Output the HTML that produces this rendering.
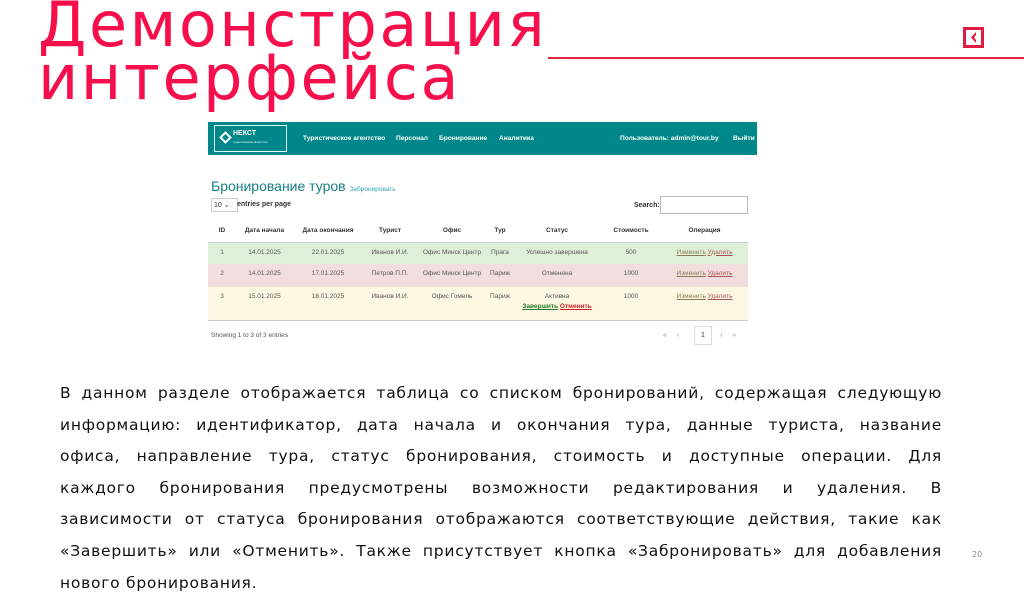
<!DOCTYPE html>
<html><head><meta charset="utf-8"><style>
*{margin:0;padding:0;box-sizing:border-box}
body{width:1024px;height:576px;overflow:hidden;background:#fff;position:relative;font-family:"DejaVu Sans","Liberation Sans",sans-serif}
.t{position:absolute;left:38px;color:#f70f4c;font-size:62px;line-height:53px;letter-spacing:2.5px;white-space:nowrap}
.line{position:absolute;left:548px;top:57px;width:476px;height:1.5px;background:#e0263f}
.ic{position:absolute;left:963px;top:27px;width:21px;height:21px;border:3px solid #e01a45}
.shot{position:absolute;left:208px;top:122px;width:549px;height:224px;font-family:"Liberation Sans",sans-serif;font-size:7px;color:#333}
.nav{height:33px;background:#00878a;color:#fff;position:relative;font-weight:bold}
.nav span{position:absolute;top:13px;font-size:6.6px}
.logo{position:absolute;left:6px;top:3px;width:73px;height:27px;border:1.5px solid #dff}
h2{position:absolute;left:3px;top:56px;font-weight:normal;font-size:14px;color:#177f85}
table{position:absolute;left:0;top:98px;width:540px;border-collapse:collapse;font-size:6.5px}
th{height:22px;font-weight:bold;border-bottom:1px solid #ccc}
td{text-align:center;vertical-align:top;padding-top:6px;color:#555}
a{color:#8a7b55;text-decoration:underline}
.b{position:absolute;left:60px;top:378px;width:882px;font-size:15.5px;line-height:31.6px;letter-spacing:0.75px;color:#111}
.b div{white-space:nowrap;text-align:justify;text-align-last:justify}
.b div.l{text-align-last:left}
</style></head><body>
<div class="t" style="top:-2px">Демонстрация</div>
<div class="t" style="top:51px">интерфейса</div>
<div class="line"></div>
<div class="ic"><svg width="15" height="15" viewBox="0 0 15 15" style="position:absolute;left:0;top:0"><path d="M10 2 L5 7.5 L10 13 L10 10 L8 7.5 L10 5Z" fill="#e01a45"/></svg></div>
<div class="shot">
<div class="nav"><div class="logo"><div style="position:absolute;left:6px;top:7px;width:9px;height:9px;border:2px solid #fff;transform:rotate(45deg)"></div><span style="left:18px;top:4px;font-size:7px">НЕКСТ</span><span style="left:18px;top:14px;font-size:3px;font-weight:normal">туристическое агентство</span></div>
<span style="left:95px">Туристическое агентство</span><span style="left:188px">Персонал</span><span style="left:231px">Бронирование</span><span style="left:291px">Аналитика</span><span style="left:412px">Пользователь: admin@tour.by</span><span style="left:525px">Выйти</span></div>
<h2>Бронирование туров <span style="font-size:6.5px;color:#3aa">Забронировать</span></h2>
<div style="position:absolute;left:3px;top:76px;width:27px;height:14px;border:1px solid #ccc;padding:2px">10 ⌄</div><div style="position:absolute;left:29px;top:79px;font-weight:bold">entries per page</div>
<div style="position:absolute;left:426px;top:80px;font-weight:bold">Search:</div><div style="position:absolute;left:452px;top:74px;width:88px;height:18px;border:1px solid #bbb"></div>
<table>
<tr><th style="width:28px">ID</th><th style="width:57px">Дата начала</th><th style="width:70px">Дата окончания</th><th style="width:54px">Турист</th><th style="width:70px">Офис</th><th style="width:26px">Тур</th><th style="width:88px">Статус</th><th style="width:60px">Стоимость</th><th>Операция</th></tr>
<tr style="background:#dff0d8;height:22px"><td>1</td><td>14.01.2025</td><td>22.01.2025</td><td>Иванов И.И.</td><td>Офис Минск Центр</td><td>Прага</td><td>Успешно завершена</td><td>500</td><td><a>Изменить</a> <a style="color:#a55">Удалить</a></td></tr>
<tr style="background:#f2dede;height:23px"><td>2</td><td>14.01.2025</td><td>17.01.2025</td><td>Петров П.П.</td><td>Офис Минск Центр</td><td>Париж</td><td>Отменена</td><td>1000</td><td><a>Изменить</a> <a style="color:#a55">Удалить</a></td></tr>
<tr style="background:#fcf8e3;height:33px;border-bottom:1px solid #ccc"><td>3</td><td>15.01.2025</td><td>18.01.2025</td><td>Иванов И.И.</td><td>Офис Гомель</td><td>Париж</td><td>Активна<br><a style="color:#2a7a2a;font-weight:bold;line-height:14px">Завершить</a> <a style="color:#c22;font-weight:bold">Отменить</a></td><td>1000</td><td><a>Изменить</a> <a style="color:#a55">Удалить</a></td></tr>
</table>
<div style="position:absolute;left:3px;top:210px;font-size:6.5px;color:#555">Showing 1 to 3 of 3 entries</div>
<div style="position:absolute;left:455px;top:210px;color:#999;word-spacing:8px">« ‹</div>
<div style="position:absolute;left:486px;top:204px;width:18px;height:19px;border:1px solid #ddd;text-align:center;line-height:17px;color:#333">1</div>
<div style="position:absolute;left:512px;top:210px;color:#999;word-spacing:8px">› »</div>
</div>
<div class="b">
<div>В данном разделе отображается таблица со списком бронирований, содержащая следующую</div>
<div>информацию: идентификатор, дата начала и окончания тура, данные туриста, название</div>
<div>офиса, направление тура, статус бронирования, стоимость и доступные операции. Для</div>
<div>каждого бронирования предусмотрены возможности редактирования и удаления. В</div>
<div>зависимости от статуса бронирования отображаются соответствующие действия, такие как</div>
<div>«Завершить» или «Отменить». Также присутствует кнопка «Забронировать» для добавления</div>
<div class="l">нового бронирования.</div>
</div>
<div style="position:absolute;left:972px;top:550px;font-size:8px;color:#888">20</div>
</body></html>
